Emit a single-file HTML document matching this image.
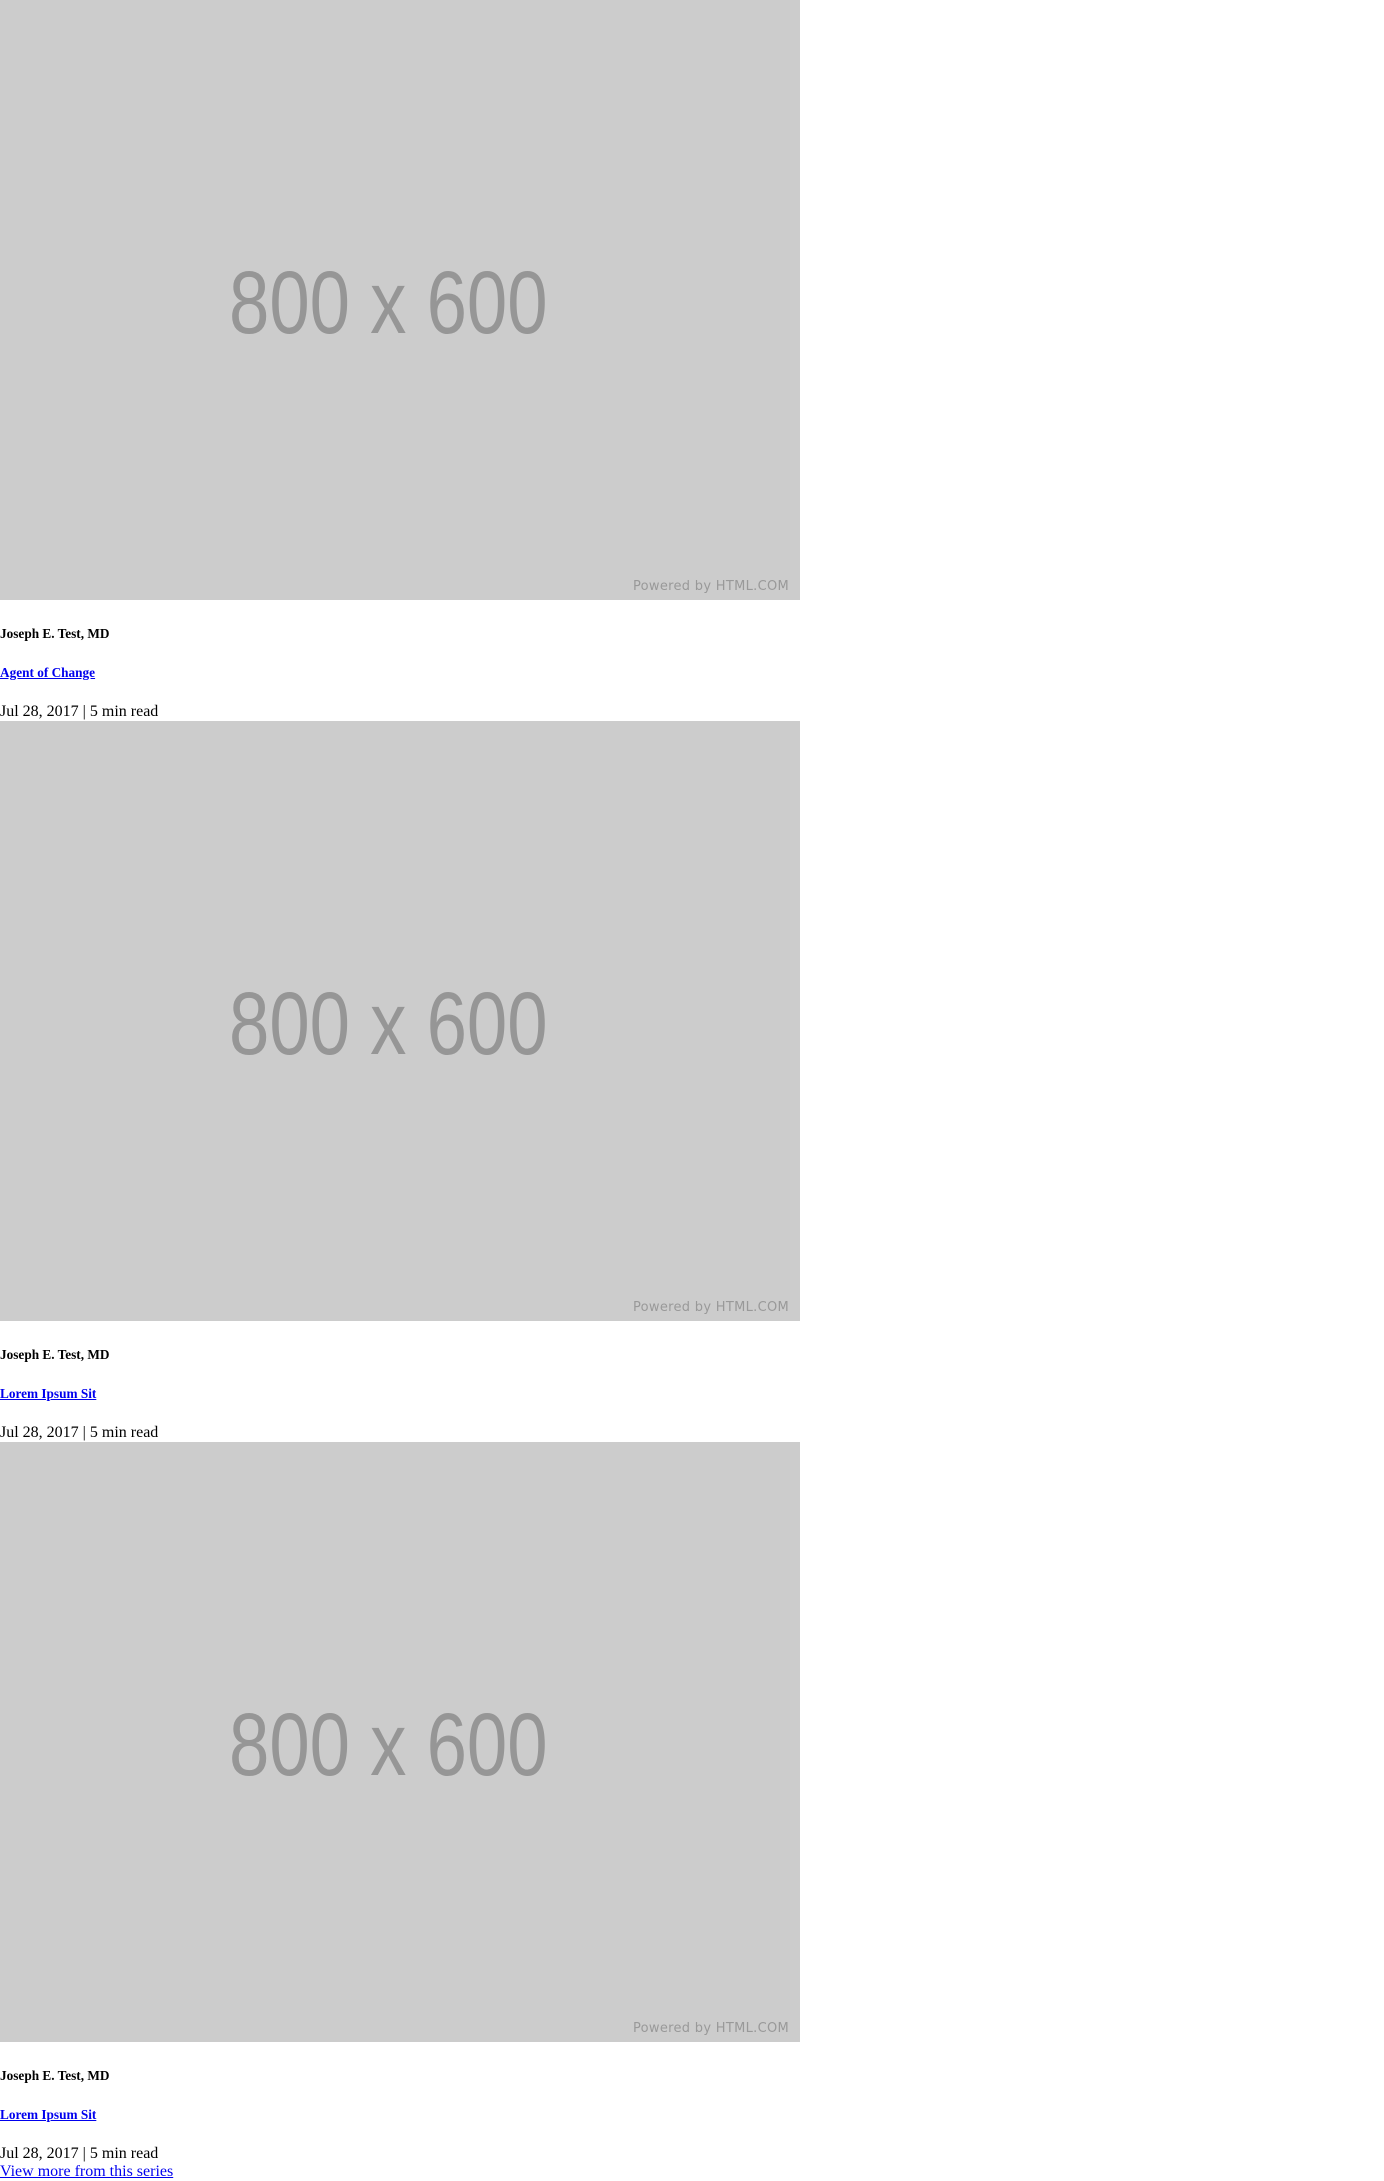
<!DOCTYPE html>
<html><head><meta charset="utf-8"><style>
body{margin:0;font-family:"Liberation Serif",serif;font-size:16px;background:#fff;color:#000}
.ph{position:relative;width:800px;height:600px;background:#ccc;overflow:hidden}
.big{position:absolute;left:229px;top:252px;font-family:"Liberation Sans",sans-serif;font-size:89px;line-height:100px;color:#969696;transform:scaleX(0.815);transform-origin:0 0;white-space:nowrap}
.pw{position:absolute;right:11px;top:579px;font-family:"DejaVu Sans","Liberation Sans",sans-serif;font-size:13px;letter-spacing:0.3px;color:#999;white-space:nowrap}
.sp{height:4px}
h5{font-size:13.28px;margin:22px 0;line-height:16.5px;font-weight:bold}
a{color:#00e}
.d{line-height:18px}
</style></head><body>
<div class="card"><div class="ph"><div class="big">800 x 600</div><div class="pw">Powered by HTML.COM</div></div><div class="sp"></div>
<h5>Joseph E. Test, MD</h5><h5><a href="#">Agent of Change</a></h5><div class="d">Jul 28, 2017 | 5 min read</div></div>
<div class="card"><div class="ph"><div class="big">800 x 600</div><div class="pw">Powered by HTML.COM</div></div><div class="sp"></div>
<h5>Joseph E. Test, MD</h5><h5><a href="#">Lorem Ipsum Sit</a></h5><div class="d">Jul 28, 2017 | 5 min read</div></div>
<div class="card"><div class="ph"><div class="big">800 x 600</div><div class="pw">Powered by HTML.COM</div></div><div class="sp"></div>
<h5>Joseph E. Test, MD</h5><h5><a href="#">Lorem Ipsum Sit</a></h5><div class="d">Jul 28, 2017 | 5 min read</div></div>
<div class="d"><a href="#">View more from this series</a></div>
</body></html>
